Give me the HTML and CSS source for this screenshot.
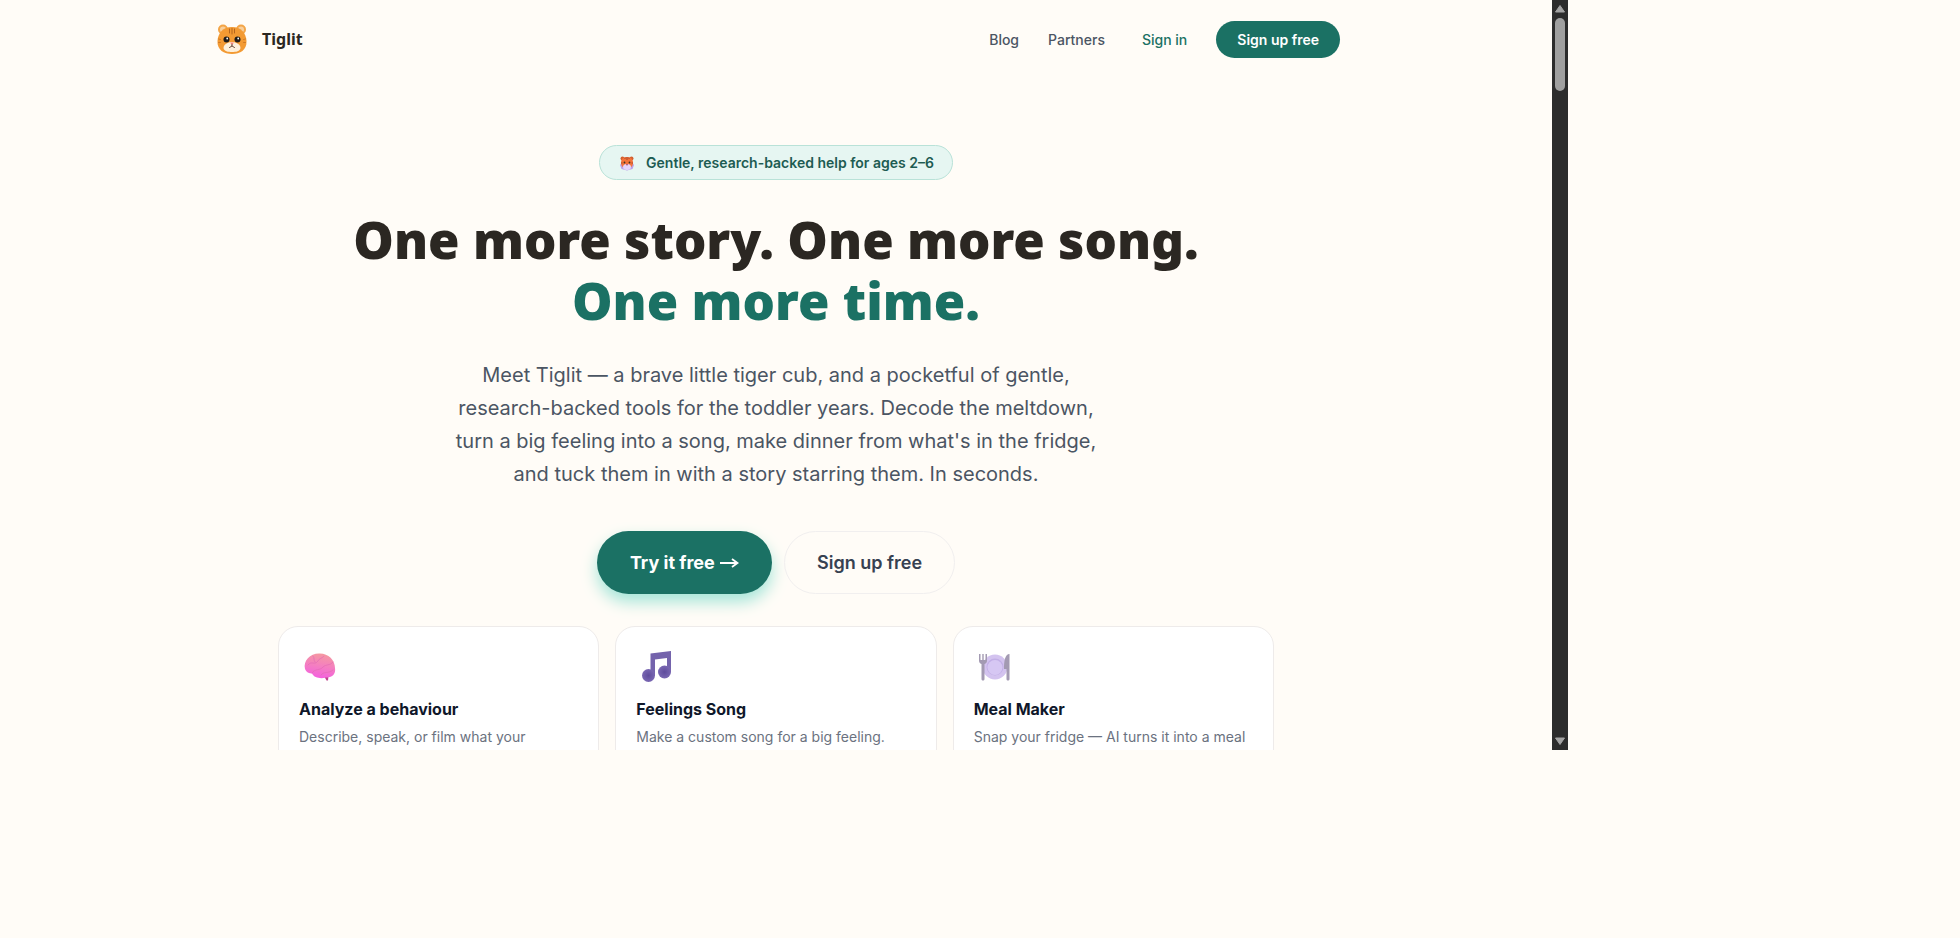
FILE: index.html
```html
<!DOCTYPE html>
<html lang="en">
<head>
<meta charset="UTF-8">
<title>Tiglit</title>
<link rel="stylesheet" href="styles.css">
</head>
<body>
<div class="window">
<div class="page">

<header class="nav">
  <a class="brand" href="#">
    <svg class="brand-icon" viewBox="0 0 40 40" aria-hidden="true">
      <circle cx="11" cy="10.500" r="5" fill="#f3a548"/>
      <circle cx="29" cy="10.500" r="5" fill="#f3a548"/>
      <circle cx="11" cy="10.500" r="3" fill="#f8cf9c"/>
      <circle cx="29" cy="10.500" r="3" fill="#f8cf9c"/>
      <path d="M20 8C29 8 34 14 34.500 22C35 31 28 35 20 35C12 35 5 31 5.500 22C6 14 11 8 20 8Z" fill="#f39a33"/>
      <path d="M17.500 10V14M20 9.500V15M22.500 10V14" stroke="#b5651d" stroke-width="1" stroke-linecap="round"/>
      <path d="M6.500 20L8.500 20.500M6.500 23.500L8.500 23.500M33.500 20L31.500 20.500M33.500 23.500L31.500 23.500" stroke="#c87422" stroke-width="0.800" stroke-linecap="round"/>
      <path d="M20 23C24 23 28.500 25.500 28.500 29C28 32.500 24 33 20 33C16 33 12 32.500 11.500 29C11.500 25.500 16 23 20 23Z" fill="#fdf0dc"/>
      <circle cx="14.500" cy="20.500" r="3" fill="#1f1b18"/>
      <circle cx="25.500" cy="20.500" r="3" fill="#1f1b18"/>
      <circle cx="15.200" cy="19.500" r="0.900" fill="#fff"/>
      <circle cx="26.200" cy="19.500" r="0.900" fill="#fff"/>
      <path d="M18 23.500H22L20 26Z" fill="#f07f78"/>
      <path d="M20 25.500V27L17.500 28.500M20 27L22.500 28.500" stroke="#5a3a2a" stroke-width="0.900" fill="none" stroke-linecap="round"/>
    </svg>
    <span>Tiglit</span>
  </a>
  <nav class="links">
    <a href="#">Blog</a>
    <a href="#">Partners</a>
    <a class="signin" href="#">Sign in</a>
    <a class="signup" href="#">Sign up free</a>
  </nav>
</header>

<main>
  <section class="hero">
    <p class="badge">
      <svg class="badge-icon" viewBox="0 0 16 16" aria-hidden="true">
        <path d="M1 10L3 7H13L15 10L13.500 14L8 15.500L2.500 14Z" fill="#b9a3e8"/>
        <circle cx="3.500" cy="3.500" r="2" fill="#d2602f"/>
        <circle cx="12.500" cy="3.500" r="2" fill="#d2602f"/>
        <path d="M8 2C12 2 14 4 14 8C14 11 12 13 8 13C4 13 2 11 2 8C2 4 4 2 8 2Z" fill="#f4733a"/>
        <path d="M8 2V5M6 2.500V4M10 2.500V4M2 8H3.500M14 8H12.500" stroke="#9a3f2a" stroke-width="0.800"/>
        <circle cx="5.500" cy="7.500" r="0.900" fill="#432"/>
        <circle cx="10.500" cy="7.500" r="0.900" fill="#432"/>
        <ellipse cx="8" cy="12" rx="4" ry="3" fill="#e4d4fa"/>
        <path d="M7 9H9L8 11Z" fill="#a3415c"/>
      </svg>
      Gentle, research-backed help for ages 2–6
    </p>
    <h1>One more story. One more song.<br><span>One more time.</span></h1>
    <p class="lead">Meet Tiglit — a brave little tiger cub, and a pocketful of gentle, research-backed tools for the toddler years. Decode the meltdown, turn a big feeling into a song, make dinner from what's in the fridge, and tuck them in with a story starring them. In seconds.</p>
    <div class="actions">
      <a class="btn primary" href="#">Try it free
        <svg class="arrow" viewBox="0 0 20 12" aria-hidden="true"><path d="M1 6H18M13 2L18.500 6L13 10" fill="none" stroke="#fff" stroke-width="1.800"/></svg>
      </a>
      <a class="btn outline" href="#">Sign up free</a>
    </div>
  </section>

  <section class="cards">
    <a class="card" href="#">
      <svg class="card-icon" viewBox="0 0 40 40" aria-hidden="true">
        <defs>
          <linearGradient id="brain" x1="0.600" y1="0" x2="0.400" y2="1">
            <stop offset="0" stop-color="#f59aa0"/>
            <stop offset="0.500" stop-color="#f47fc0"/>
            <stop offset="1" stop-color="#f45fe0"/>
          </linearGradient>
        </defs>
        <path d="M25 29L27.500 33.500L29 33.500L29.500 29Z" fill="#c0428e"/>
        <path d="M6 22C4 14 11 6.500 20 6.500C29 6 36 13 36 21C37 27 33 31 27 30.500C22 32 15 31 13 26.500C10 26.500 7 25 6 22Z" fill="url(#brain)"/>
        <path d="M9 18C13 13 15 19 19 14C20 11 23 12 25 9M13 26C16 21 21 24 24 20C27 17 31 19 34 15M22 28C25 24 29 27 34 23M14 9C16 11 14 13 16 15" stroke="#e26bb4" stroke-width="0.700" fill="none" stroke-linecap="round"/>
      </svg>
      <h2>Analyze a behaviour</h2>
      <p>Describe, speak, or film what your</p>
    </a>
    <a class="card" href="#">
      <svg class="card-icon" viewBox="0 0 40 40" aria-hidden="true">
        <defs>
          <radialGradient id="note">
            <stop offset="0" stop-color="#5f4c9c"/>
            <stop offset="1" stop-color="#7967b2"/>
          </radialGradient>
        </defs>
        <path d="M14.500 6.500L35 4V25H31V11L19 12.500V29H14.500Z" fill="#7463ac"/>
        <circle cx="12.500" cy="28.500" r="6.500" fill="url(#note)"/>
        <circle cx="28.500" cy="25" r="6.500" fill="url(#note)"/>
      </svg>
      <h2>Feelings Song</h2>
      <p>Make a custom song for a big feeling.</p>
    </a>
    <a class="card" href="#">
      <svg class="card-icon" viewBox="0 0 40 40" aria-hidden="true">
        <circle cx="21" cy="20" r="12.500" fill="#d3c3ef"/>
        <circle cx="21" cy="20" r="8.500" fill="#c2afe6"/>
        <circle cx="21" cy="20.500" r="7.500" fill="#d6c7f3"/>
        <path d="M5 7V14C5 16 7 17 7.500 17V32C7.500 34 10.500 34 10.500 32V17C11 17 13 16 13 14V7H11.500V13H9.700V7H8.300V13H6.500V7Z" fill="#a39ab2"/>
        <path d="M35.500 7V32C35.500 34 32.500 34 32.500 32V22H30C30 14 31 7 35.500 7Z" fill="#a39ab2"/>
      </svg>
      <h2>Meal Maker</h2>
      <p>Snap your fridge — AI turns it into a meal</p>
    </a>
  </section>
</main>

</div>
<div class="scrollbar" aria-hidden="true">
  <svg viewBox="0 0 16 18"><path d="M8 5.500L12.500 12H3.500Z" fill="#a3a3a3" stroke="#a3a3a3" stroke-linejoin="round"/></svg>
  <div class="thumb"></div>
  <svg class="down" viewBox="0 0 16 18"><path d="M8 12.500L12.500 6H3.500Z" fill="#a3a3a3" stroke="#a3a3a3" stroke-linejoin="round"/></svg>
</div>
</div>
</body>
</html>
```
FILE: styles.css
```css
*{box-sizing:border-box;}
body{margin:0;background:#fffcf7;font-family:Inter,sans-serif;font-optical-sizing:none;color:#2b2722;}
a{text-decoration:none;color:inherit;}
h1,h2,p{margin:0;}

.window{display:flex;width:80vw;height:80vh;overflow:hidden;}
.page{flex:1;min-width:0;overflow:hidden;}

.nav{display:flex;align-items:center;justify-content:space-between;max-width:1176px;height:78px;margin:0 auto;padding:0 24px;}
.brand{display:flex;align-items:center;gap:10px;font-family:"Noto Sans",sans-serif;font-size:16px;font-weight:700;}
.brand-icon{width:40px;height:40px;}
.links{display:flex;align-items:center;gap:29px;font-size:14px;font-weight:500;color:#4b5563;}
.signin{color:#1b7164;padding-left:8px;}
.signup{background:#1b7164;color:#fff;font-weight:600;padding:10px 21px;line-height:17px;border-radius:999px;}

.hero{display:flex;flex-direction:column;align-items:center;padding-top:67px;text-align:center;}
.badge{display:flex;align-items:center;gap:10px;padding:8px 18px;border:1px solid #b9e2d8;border-radius:999px;background:#e6f6f2;color:#1d5c52;font-size:14px;font-weight:600;line-height:17px;}
.badge-icon{width:18px;height:16px;}
h1{margin-top:29px;font-family:"Noto Sans",sans-serif;font-size:51px;font-weight:900;line-height:61px;}
h1 span{color:#1b7164;}
.lead{max-width:672px;margin-top:28px;font-size:20px;line-height:33px;color:#4b5563;}
.actions{display:flex;gap:12px;margin-top:40px;}
.btn{padding:20px 32px;border:1px solid transparent;border-radius:999px;font-size:18px;line-height:21px;}
.primary{background:#1b7164;color:#fff;font-weight:700;box-shadow:0 8px 16px #a5e5d8;}
.arrow{width:20px;height:12px;}
.outline{border-color:#f1efef;color:#374151;font-weight:600;}

.cards{display:grid;grid-template-columns:repeat(3,1fr);gap:16px;max-width:996px;margin:32px auto 0;}
.card{padding:20px;border:1px solid #eeebea;border-radius:20px;background:#fff;}
.card-icon{display:block;width:40px;height:40px;}
.card h2{margin-top:12px;font-size:16px;font-weight:700;line-height:20px;color:#0f172a;}
.card p{margin-top:6px;font-size:14px;line-height:23px;color:#6b7280;}

.scrollbar{display:flex;flex-direction:column;width:16px;background:#2c2c2c;}
.thumb{flex:0 0 73px;width:10px;margin:0 auto;border-radius:5px;background:#a0a0a0;}
.down{margin-top:auto;}
```
